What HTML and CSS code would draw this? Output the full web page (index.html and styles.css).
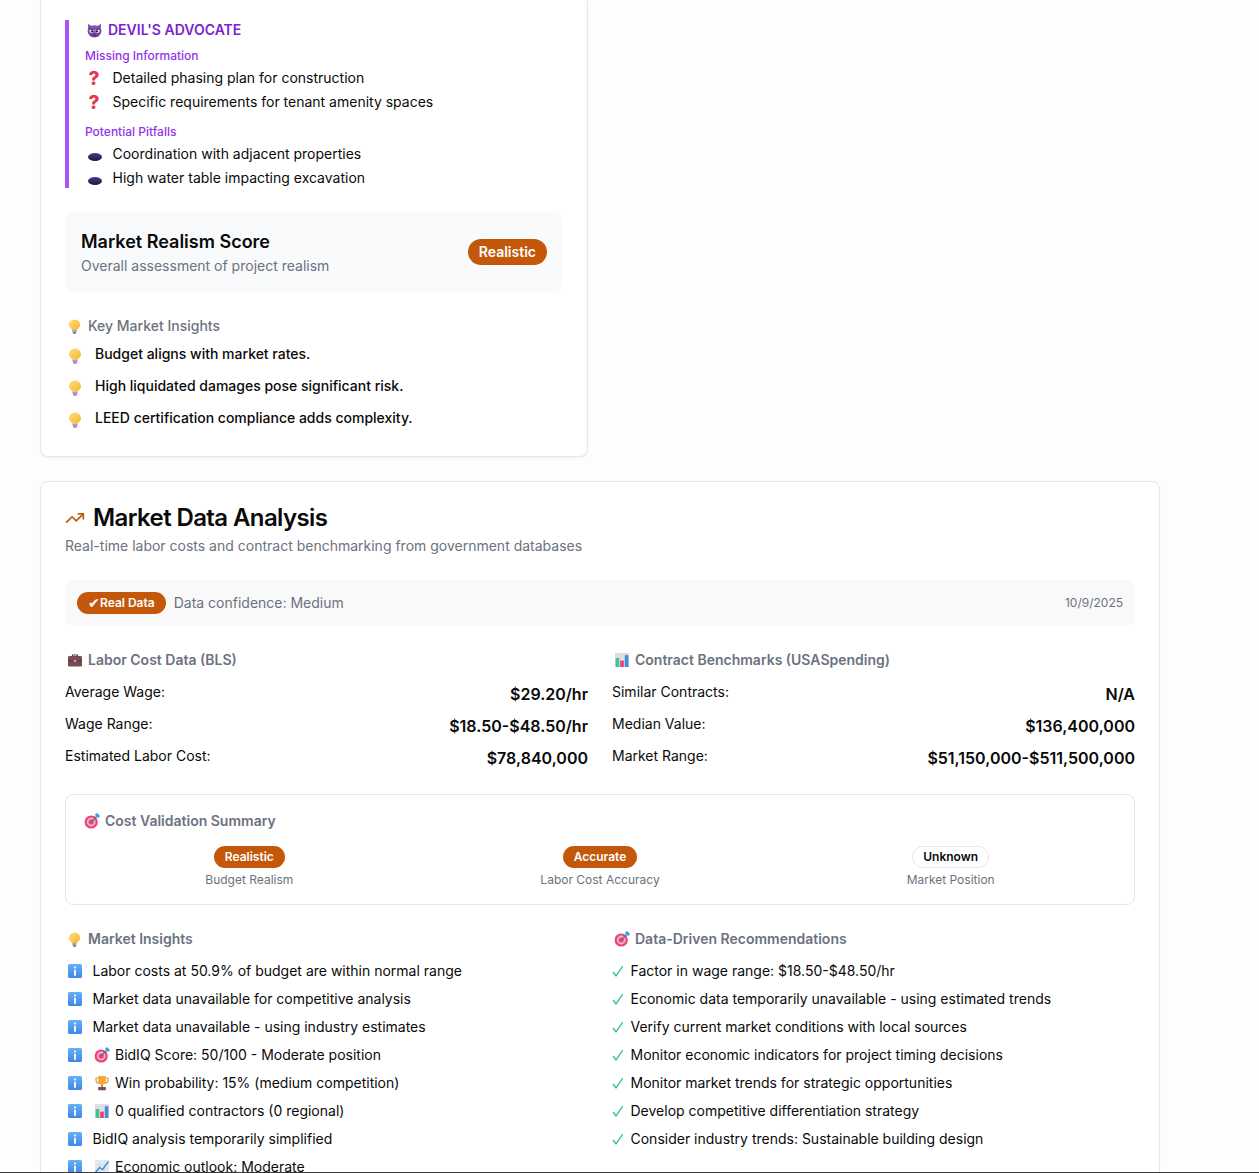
FILE: index.html
```html
<!DOCTYPE html>
<html lang="en">
<head>
<meta charset="utf-8">
<title>Market Data Analysis</title>
<link rel="stylesheet" href="styles.css">
</head>
<body>
<svg class="defs" width="0" height="0" aria-hidden="true">
  <defs>
    <linearGradient id="g-hole" x1="0" y1="0" x2="0" y2="1"><stop offset="0" stop-color="#4a3a86"/><stop offset="1" stop-color="#1d1440"/></linearGradient>
    <linearGradient id="g-info" x1="0" y1="0" x2="0" y2="1"><stop offset="0" stop-color="#64b2f7"/><stop offset="1" stop-color="#3f86ec"/></linearGradient>
    <linearGradient id="g-devil" x1="0" y1="0" x2="0" y2="1"><stop offset="0" stop-color="#8a5ab8"/><stop offset="1" stop-color="#64409a"/></linearGradient>
    <linearGradient id="g-bulb" x1="0" y1="0" x2="1" y2="1"><stop offset="0" stop-color="#ffe07a"/><stop offset="1" stop-color="#f9b233"/></linearGradient>
    <linearGradient id="g-check" x1="0" y1="1" x2="1" y2="0"><stop offset="0" stop-color="#2fbf71"/><stop offset="1" stop-color="#35c8c0"/></linearGradient>
    <symbol id="i-devil" viewBox="0 0 16 16">
      <path d="M1 .8 L4.4 3 Q8 1.6 11.6 3 L15 .8 L14.8 5.6 Q15.6 7.6 15.2 9.6 Q14 15.4 8 15.4 Q2 15.4 .8 9.6 Q.4 7.6 1.2 5.6 Z" fill="url(#g-devil)"/>
      <ellipse cx="5.1" cy="8.6" rx="2.6" ry="2.3" fill="#e9e2f2"/>
      <ellipse cx="10.9" cy="8.6" rx="2.6" ry="2.3" fill="#e9e2f2"/>
      <circle cx="5.6" cy="8.9" r="1.3" fill="#2b1c3d"/>
      <circle cx="10.4" cy="8.9" r="1.3" fill="#2b1c3d"/>
      <path d="M2.4 6 L7 7.4 M13.6 6 L9 7.4" stroke="#3d2458" stroke-width="1"/>
      <path d="M6 12.6 Q8 13.6 10 12.6" stroke="#3d2458" stroke-width=".9" fill="none"/>
    </symbol>
    <symbol id="i-hole" viewBox="0 0 16 16">
      <ellipse cx="8" cy="9" rx="7" ry="4" fill="url(#g-hole)"/>
    </symbol>
    <symbol id="i-bulb" viewBox="0 0 16 16">
      <path d="M8 .4 A6 6 0 0 1 14 6.4 C14 8.4 12.6 9.4 11.4 10.6 L10.6 11.8 H5.4 L4.6 10.6 C3.4 9.4 2 8.4 2 6.4 A6 6 0 0 1 8 .4Z" fill="url(#g-bulb)"/>
      <rect x="5.6" y="11.8" width="4.8" height="2.4" rx=".5" fill="#a79cc4"/>
      <rect x="6.2" y="14.2" width="3.6" height="1.4" rx=".6" fill="#6c5f92"/>
    </symbol>
    <symbol id="i-case" viewBox="0 0 16 16">
      <path d="M5.5 4.5 V3 H10.5 V4.5" stroke="#5a3a44" stroke-width="1.2" fill="none"/>
      <rect x="1" y="4" width="14" height="10.6" rx="1.4" fill="#7b4a58"/>
      <rect x="1" y="8.4" width="14" height="1" fill="#5e3542"/>
      <rect x="6.8" y="7.8" width="2.4" height="2.2" fill="#e3a15a"/>
    </symbol>
    <symbol id="i-chart" viewBox="0 0 16 16">
      <rect x="1" y="1" width="14" height="14" fill="#dcdde6"/>
      <rect x="1.6" y="6" width="3.6" height="9" fill="#46c28a"/>
      <rect x="6.2" y="8.6" width="3.6" height="6.4" fill="#ea3f78"/>
      <rect x="10.8" y="3.2" width="3.6" height="11.8" fill="#3f8fd8"/>
    </symbol>
    <symbol id="i-target" viewBox="0 0 16 16">
      <circle cx="7.2" cy="9" r="6.6" fill="#e8457a"/>
      <circle cx="7.2" cy="9" r="4.4" fill="#f3b7cb"/>
      <circle cx="7.2" cy="9" r="2.6" fill="#e8457a"/>
      <path d="M7.2 9 L13 3" stroke="#5d6b86" stroke-width="1.1"/>
      <path d="M11 1.6 L12.2 3.8 L14.4 5 L16 3 L14.6 1.4 L13 0Z" fill="#3aa0ea"/>
    </symbol>
    <symbol id="i-info" viewBox="0 0 16 16">
      <rect x="1" y="1" width="14" height="14" rx="1.6" fill="url(#g-info)"/>
      <circle cx="8" cy="4.6" r="1.1" fill="#f2f7ff"/>
      <rect x="7" y="6.8" width="2" height="6" fill="#f2f7ff"/>
    </symbol>
    <symbol id="i-trophy" viewBox="0 0 16 16">
      <path d="M2 3 H14 V5 Q14 8 10.8 8.4 M2 3 V5 Q2 8 5.2 8.4" stroke="#e09a2e" stroke-width="1.2" fill="none"/>
      <path d="M4.2 1 H11.8 V6 Q11.8 9.6 8 9.8 Q4.2 9.6 4.2 6Z" fill="#f2a93b"/>
      <rect x="7" y="9.6" width="2" height="2.6" fill="#d98a24"/>
      <rect x="4.2" y="12" width="7.6" height="3.2" rx=".5" fill="#7b4a58"/>
    </symbol>
    <symbol id="i-trend" viewBox="0 0 16 16">
      <rect x="1" y="1" width="14" height="14" fill="#e6e8f0"/>
      <path d="M1 6 H15 M1 10 H15 M5.5 1 V15 M10.5 1 V15" stroke="#cfd3df" stroke-width=".6"/>
      <path d="M1.5 13.5 L5.5 8.5 L8.5 10.5 L14.5 2.5" stroke="#3f8fd8" stroke-width="1.4" fill="none"/>
    </symbol>
    <symbol id="i-check" viewBox="0 0 12 12">
      <path d="M1.2 7 L4 10.8 L10.8 1.2" stroke="url(#g-check)" stroke-width="1.4" fill="none"/>
    </symbol>
  </defs>
</svg>

<main class="page">
  <div class="top-grid">
    <section class="card card-cut">
      <div class="devil">
        <h3 class="devil-title"><svg class="ico ico-devil"><use href="#i-devil"/></svg>DEVIL'S ADVOCATE</h3>
        <h4 class="devil-sub">Missing Information</h4>
        <ul class="devil-list">
          <li><span class="mark-q">?</span>Detailed phasing plan for construction</li>
          <li><span class="mark-q">?</span>Specific requirements for tenant amenity spaces</li>
        </ul>
        <h4 class="devil-sub devil-sub-next">Potential Pitfalls</h4>
        <ul class="devil-list">
          <li><svg class="ico ico-mark"><use href="#i-hole"/></svg>Coordination with adjacent properties</li>
          <li><svg class="ico ico-mark"><use href="#i-hole"/></svg>High water table impacting excavation</li>
        </ul>
      </div>

      <div class="score">
        <div>
          <div class="score-title">Market Realism Score</div>
          <div class="score-sub">Overall assessment of project realism</div>
        </div>
        <span class="pill pill-lg">Realistic</span>
      </div>

      <h4 class="sec-head sec-light"><svg class="ico ico-head ico-bulb-head"><use href="#i-bulb"/></svg>Key Market Insights</h4>
      <ul class="key-list">
        <li><svg class="ico ico-key"><use href="#i-bulb"/></svg>Budget aligns with market rates.</li>
        <li><svg class="ico ico-key"><use href="#i-bulb"/></svg>High liquidated damages pose significant risk.</li>
        <li><svg class="ico ico-key"><use href="#i-bulb"/></svg>LEED certification compliance adds complexity.</li>
      </ul>
    </section>
  </div>

  <section class="card card-market">
    <h2 class="market-title">
      <svg class="trend" viewBox="0 0 24 24" fill="none" stroke="#c2570c" stroke-width="2" stroke-linecap="round" stroke-linejoin="round"><polyline points="22 7 13.5 15.5 8.5 10.5 2 17"/><polyline points="16 7 22 7 22 13"/></svg>
      Market Data Analysis
    </h2>
    <p class="market-sub">Real-time labor costs and contract benchmarking from government databases</p>

    <div class="status">
      <div class="status-left">
        <span class="pill pill-sm"><span class="tick">✔</span>Real Data</span>
        <span class="status-text">Data confidence: Medium</span>
      </div>
      <span class="status-date">10/9/2025</span>
    </div>

    <div class="two-col">
      <div>
        <h4 class="sec-head"><svg class="ico ico-head"><use href="#i-case"/></svg>Labor Cost Data (BLS)</h4>
        <div class="row"><span>Average Wage:</span><strong>$29.20/hr</strong></div>
        <div class="row"><span>Wage Range:</span><strong>$18.50-$48.50/hr</strong></div>
        <div class="row"><span>Estimated Labor Cost:</span><strong>$78,840,000</strong></div>
      </div>
      <div>
        <h4 class="sec-head"><svg class="ico ico-head"><use href="#i-chart"/></svg>Contract Benchmarks (USASpending)</h4>
        <div class="row"><span>Similar Contracts:</span><strong>N/A</strong></div>
        <div class="row"><span>Median Value:</span><strong>$136,400,000</strong></div>
        <div class="row"><span>Market Range:</span><strong>$51,150,000-$511,500,000</strong></div>
      </div>
    </div>

    <div class="summary">
      <h4 class="sec-head"><svg class="ico ico-head"><use href="#i-target"/></svg>Cost Validation Summary</h4>
      <div class="summary-grid">
        <div class="summary-cell"><span class="pill pill-sm">Realistic</span><span class="summary-label">Budget Realism</span></div>
        <div class="summary-cell"><span class="pill pill-sm">Accurate</span><span class="summary-label">Labor Cost Accuracy</span></div>
        <div class="summary-cell"><span class="pill pill-sm pill-outline">Unknown</span><span class="summary-label">Market Position</span></div>
      </div>
    </div>

    <div class="two-col">
      <div>
        <h4 class="sec-head"><svg class="ico ico-head ico-bulb-head"><use href="#i-bulb"/></svg>Market Insights</h4>
        <ul class="data-list">
          <li><svg class="ico ico-info"><use href="#i-info"/></svg>Labor costs at 50.9% of budget are within normal range</li>
          <li><svg class="ico ico-info"><use href="#i-info"/></svg>Market data unavailable for competitive analysis</li>
          <li><svg class="ico ico-info"><use href="#i-info"/></svg>Market data unavailable - using industry estimates</li>
          <li><svg class="ico ico-info"><use href="#i-info"/></svg><svg class="ico ico-inline"><use href="#i-target"/></svg>BidIQ Score: 50/100 - Moderate position</li>
          <li><svg class="ico ico-info"><use href="#i-info"/></svg><svg class="ico ico-inline"><use href="#i-trophy"/></svg>Win probability: 15% (medium competition)</li>
          <li><svg class="ico ico-info"><use href="#i-info"/></svg><svg class="ico ico-inline"><use href="#i-chart"/></svg>0 qualified contractors (0 regional)</li>
          <li><svg class="ico ico-info"><use href="#i-info"/></svg>BidIQ analysis temporarily simplified</li>
          <li><svg class="ico ico-info"><use href="#i-info"/></svg><svg class="ico ico-inline"><use href="#i-trend"/></svg>Economic outlook: Moderate</li>
        </ul>
      </div>
      <div>
        <h4 class="sec-head"><svg class="ico ico-head"><use href="#i-target"/></svg>Data-Driven Recommendations</h4>
        <ul class="data-list">
          <li><svg class="ico ico-check"><use href="#i-check"/></svg>Factor in wage range: $18.50-$48.50/hr</li>
          <li><svg class="ico ico-check"><use href="#i-check"/></svg>Economic data temporarily unavailable - using estimated trends</li>
          <li><svg class="ico ico-check"><use href="#i-check"/></svg>Verify current market conditions with local sources</li>
          <li><svg class="ico ico-check"><use href="#i-check"/></svg>Monitor economic indicators for project timing decisions</li>
          <li><svg class="ico ico-check"><use href="#i-check"/></svg>Monitor market trends for strategic opportunities</li>
          <li><svg class="ico ico-check"><use href="#i-check"/></svg>Develop competitive differentiation strategy</li>
          <li><svg class="ico ico-check"><use href="#i-check"/></svg>Consider industry trends: Sustainable building design</li>
        </ul>
      </div>
    </div>
  </section>
</main>
<div class="edge"></div>
</body>
</html>
```

FILE: styles.css
```css
* { box-sizing: border-box; }
html, body { margin: 0; padding: 0; height: 1173px; overflow: hidden; }
body {
  background: #fdfdfd;
  color: #0a0a0a;
  font-family: "Inter", "Liberation Sans", sans-serif;
  font-size: 14px;
  line-height: 20px;
}
h2, h3, h4, p, ul { margin: 0; padding: 0; }
ul { list-style: none; }
.defs { position: absolute; }
.edge { position: fixed; left: 0; right: 0; bottom: 0; height: 1px; background: #3a3a3a; }

.page { width: 1120px; margin-left: 40px; }
.top-grid { display: grid; grid-template-columns: 548px 548px; gap: 24px; }

.card {
  background: #fff;
  border: 1px solid #e5e7eb;
  border-radius: 8px;
  box-shadow: 0 1px 2px rgba(0,0,0,.05);
  padding: 24px;
}
.card-cut {
  border-top: 0;
  border-top-left-radius: 0;
  border-top-right-radius: 0;
  padding-top: 20px;
  padding-bottom: 22px;
}
.card-market { margin-top: 24px; }

.ico { display: block; flex: none; }

/* Devil's advocate */
.devil { border-left: 4px solid #a855f7; padding-left: 16px; }
.devil-title {
  display: flex; align-items: center;
  font-size: 14px; font-weight: 600; line-height: 20px; color: #7e22ce;
}
.ico-devil { width: 15px; height: 15px; margin: 0 6px 0 2px; }
.devil-sub { margin-top: 8px; font-size: 12px; font-weight: 500; line-height: 16px; color: #9333ea; }
.devil-sub-next { margin-top: 12px; }
.devil-list li { display: flex; align-items: center; margin-top: 4px; height: 20px; }
.mark-q {
  width: 27.5px; padding: 1.5px 0 0 3.5px; flex: none;
  font-size: 19px; font-weight: 800; color: #e5344f; line-height: 20px;
}
.ico-mark { width: 16px; height: 16px; margin: 4px 9.5px 0 2px; }

/* Score */
.score {
  display: flex; justify-content: space-between; align-items: center;
  margin-top: 24px; padding: 16px;
  background: #f8fafc; border-radius: 8px;
}
.score-title { font-size: 18px; font-weight: 600; line-height: 28px; }
.score-sub { color: #6b7280; }

.pill {
  display: inline-flex; align-items: center; justify-content: center;
  background: #c4580a; color: #fff; border-radius: 999px; font-weight: 600;
}
.pill-lg { height: 26px; padding: 0 11px; font-size: 14px; }
.pill-sm { height: 22px; padding: 0 11px; font-size: 12px; }
.pill-outline { background: #fff; color: #0a0a0a; border: 1px solid #e5e7eb; padding: 0 10px; }

.sec-head {
  display: flex; align-items: center;
  font-size: 14px; font-weight: 600; line-height: 20px; color: #6b7280;
}
.sec-light { margin-top: 24px; font-weight: 500; }
.ico-head { width: 16px; height: 16px; margin: 0 5.5px 0 1.5px; }
.ico-bulb-head { width: 15px; height: 15px; margin: 0 6px 0 2px; }

.key-list { margin-top: 2px; font-weight: 500; }
.key-list li { display: flex; align-items: center; height: 32px; }
.ico-key { width: 16px; height: 16px; margin: 3px 12px 0 2px; }

/* Market */
.market-title {
  display: flex; align-items: center; gap: 8px;
  font-size: 24px; font-weight: 600; line-height: 24px; letter-spacing: -.6px;
}
.trend { width: 20px; height: 20px; flex: none; }
.market-sub { margin-top: 6px; color: #6b7280; }

.status {
  display: flex; justify-content: space-between; align-items: center;
  margin-top: 24px; padding: 12px;
  background: #f9f9f9; border-radius: 8px;
}
.status-left { display: flex; align-items: center; gap: 8px; }
.status-text { color: #6b7280; }
.status-date { font-size: 12px; color: #6b7280; }
.tick { width: 12px; font-family: "DejaVu Sans", sans-serif; font-size: 14px; font-weight: 400; overflow: visible; white-space: nowrap; }

.two-col { display: grid; grid-template-columns: 1fr 1fr; gap: 24px; margin-top: 24px; }
.row { display: flex; justify-content: space-between; align-items: flex-start; margin-top: 12px; }
.row + .row { margin-top: 8px; }
.row strong { font-size: 16px; font-weight: 600; line-height: 24px; }

.summary {
  margin-top: 24px; padding: 16px;
  border: 1px solid #e5e7eb; border-radius: 8px;
}
.summary-grid { display: grid; grid-template-columns: repeat(3, 1fr); gap: 16px; margin-top: 15px; }
.summary-cell { display: flex; flex-direction: column; align-items: center; gap: 4px; }
.summary-label { font-size: 12px; line-height: 16px; color: #6b7280; }

.data-list { margin-top: 12px; }
.data-list li { display: flex; align-items: center; height: 20px; margin-bottom: 8px; }
.ico-info { width: 16px; height: 16px; margin: 0 9.5px 0 2px; }
.ico-inline { width: 16px; height: 16px; margin: 0 5.5px 0 1px; }
.ico-check { width: 12px; height: 12px; margin: 0 6.5px 0 0; }
```
